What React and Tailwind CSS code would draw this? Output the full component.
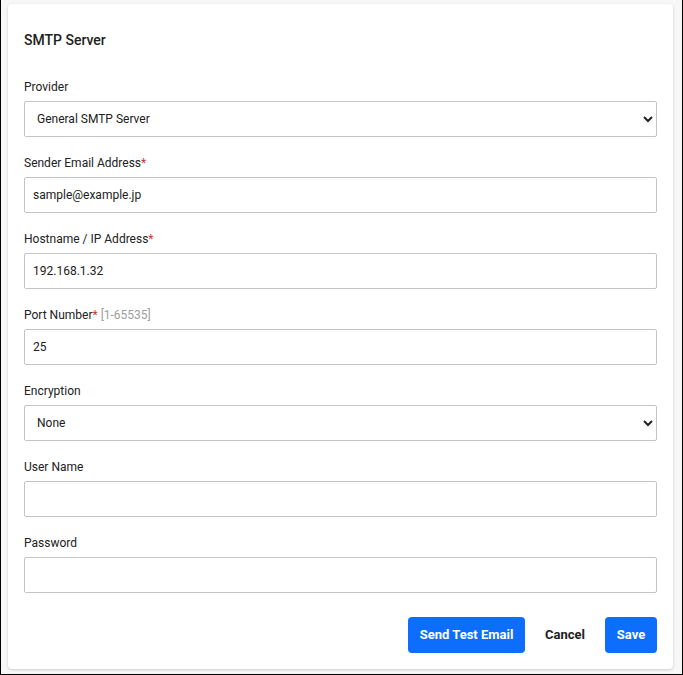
import { useState } from "react";

const Label = ({ text, required, hint }) => (
  <label className="block h-4 mb-[7px] text-[12px] leading-[18px] text-[#212121]">
    {text}
    {required && <span className="text-[#d32f2f]">*</span>}
    {hint && <span className="text-[#9e9e9e]"> {hint}</span>}
  </label>
);

const inputCls =
  "block w-full h-9 px-2 text-[12px] text-[#212121] bg-white border border-[#c4c4c4] rounded-[2px] outline-none";

const App = () => {
  const [form, setForm] = useState({
    provider: "General SMTP Server",
    email: "sample@example.jp",
    host: "192.168.1.32",
    port: "25",
    encryption: "None",
    user: "",
    password: "",
  });

  const set = (key) => (e) => setForm({ ...form, [key]: e.target.value });

  return (
    <div
      className="h-[675px] bg-[#f7f7f7] border-l border-r border-b border-black pl-[7px] pr-[9px] pt-[4px] pb-[5px]"
      style={{ fontFamily: "Roboto, 'Liberation Sans', sans-serif" }}
    >
      <div className="h-full bg-white rounded-[4px] shadow-[0_1px_3px_rgba(0,0,0,0.18)] px-4 pt-[26px]">
        <h2 className="text-[14px] leading-5 font-medium text-[#212121] mb-[28px]">
          SMTP Server
        </h2>

        <div className="flex flex-col gap-[17px]">
          <div>
            <Label text="Provider" />
            <select className={inputCls} value={form.provider} onChange={set("provider")}>
              <option>General SMTP Server</option>
              <option>Gmail</option>
              <option>Outlook</option>
            </select>
          </div>

          <div>
            <Label text="Sender Email Address" required />
            <input className={inputCls} value={form.email} onChange={set("email")} />
          </div>

          <div>
            <Label text="Hostname / IP Address" required />
            <input className={inputCls} value={form.host} onChange={set("host")} />
          </div>

          <div>
            <Label text="Port Number" required hint="[1-65535]" />
            <input className={inputCls} value={form.port} onChange={set("port")} />
          </div>

          <div>
            <Label text="Encryption" />
            <select className={inputCls} value={form.encryption} onChange={set("encryption")}>
              <option>None</option>
              <option>SSL/TLS</option>
              <option>STARTTLS</option>
            </select>
          </div>

          <div>
            <Label text="User Name" />
            <input className={inputCls} value={form.user} onChange={set("user")} />
          </div>

          <div>
            <Label text="Password" />
            <input
              type="password"
              className={inputCls}
              value={form.password}
              onChange={set("password")}
            />
          </div>
        </div>

        <div className="flex justify-end items-center gap-5 mt-6">
          <button className="h-9 w-[117px] rounded-[4px] bg-[#0d6efd] text-white text-[13px] font-bold">
            Send Test Email
          </button>
          <button className="h-9 px-0 text-[13px] font-bold text-[#212121]">Cancel</button>
          <button className="h-9 w-[52px] rounded-[4px] bg-[#0d6efd] text-white text-[13px] font-bold">
            Save
          </button>
        </div>
      </div>
    </div>
  );
};

export default App;
